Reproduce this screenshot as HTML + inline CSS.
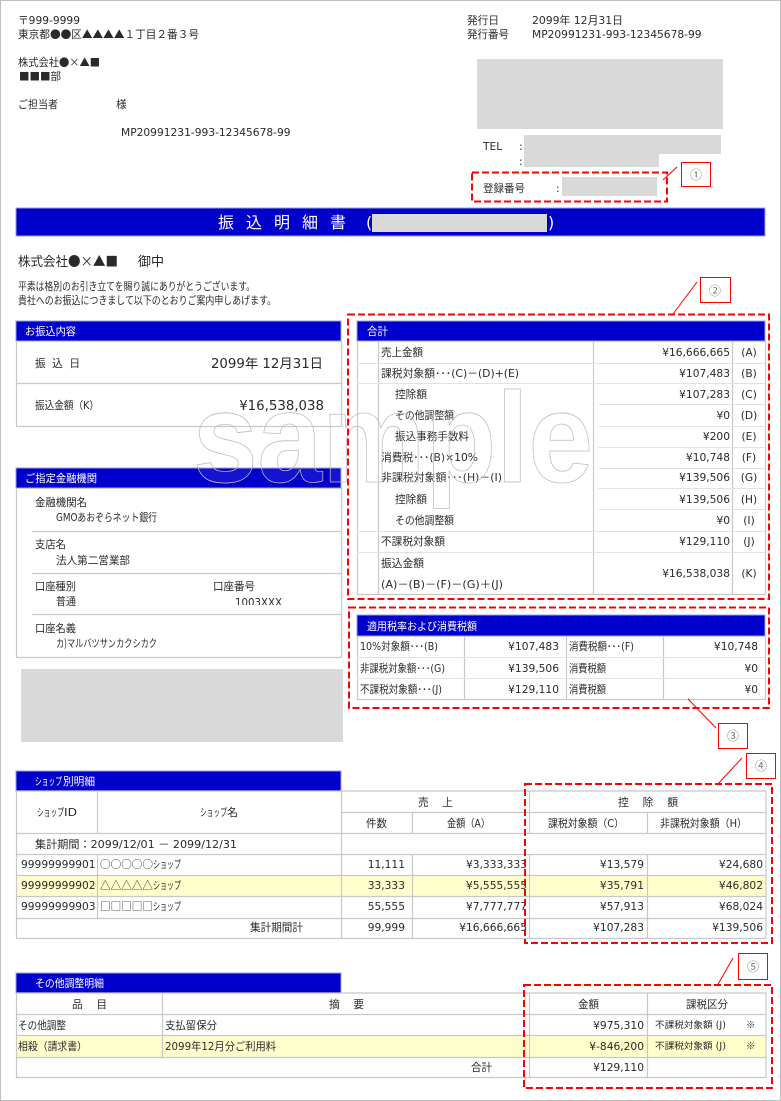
<!DOCTYPE html>
<html lang="ja">
<head>
<meta charset="utf-8">
<title>振込明細書</title>
<style>
html,body{margin:0;padding:0;background:#fff;width:781px;height:1101px;overflow:hidden}
svg{display:block;filter:blur(.3px)}
text{font-family:"DejaVu Sans","Noto Sans CJK JP",sans-serif;font-size:10.67px;fill:#2a2a2a}
.j{font-family:"Noto Sans CJK JP",sans-serif}
.w{fill:#fff}
.e{text-anchor:end}
.m{text-anchor:middle}
.l{stroke:#c8c8c8;stroke-width:1.2;fill:none}
.t{stroke:#e2e2e2;stroke-width:1;fill:none}
.b{fill:#0000cc;stroke:#9c9ce4;stroke-width:1}
.g{fill:#d9d9d9}
.d{fill:none;stroke:#f00;stroke-width:2;stroke-dasharray:7 3}
.r{fill:#fff;stroke:#f00;stroke-width:1}
.rl{stroke:#f00;stroke-width:1;fill:none}
.n{fill:#777;font-size:12px;text-anchor:middle;font-family:"Noto Sans CJK JP",sans-serif}
</style>
</head>
<body>
<svg xmlns="http://www.w3.org/2000/svg" width="781" height="1101" viewBox="0 0 781 1101">
<rect x="0.5" y="0.5" width="780" height="1100" fill="#fff" stroke="#c0c0c0"/>

<!-- address -->
<text x="18" y="24" textLength="62" lengthAdjust="spacingAndGlyphs">〒999-9999</text>
<text class="j" x="18" y="38" textLength="181" lengthAdjust="spacingAndGlyphs">東京都●●区▲▲▲▲１丁目２番３号</text>
<text class="j" x="18" y="66" textLength="82" lengthAdjust="spacingAndGlyphs">株式会社●×▲■</text>
<text class="j" x="19" y="80" textLength="42" lengthAdjust="spacingAndGlyphs">■■■部</text>
<text x="18" y="108" textLength="40" lengthAdjust="spacingAndGlyphs">ご担当者</text>
<text x="116" y="108">様</text>
<text x="121" y="136">MP20991231-993-12345678-99</text>

<text x="467" y="24" textLength="32" lengthAdjust="spacingAndGlyphs">発行日</text>
<text x="532" y="24" textLength="91" lengthAdjust="spacingAndGlyphs">2099年 12月31日</text>
<text x="467" y="38" textLength="42" lengthAdjust="spacingAndGlyphs">発行番号</text>
<text x="532" y="38">MP20991231-993-12345678-99</text>

<rect class="g" x="477" y="59" width="246" height="70"/>
<text x="483" y="150">TEL</text>
<text x="519" y="150">:</text>
<text x="519" y="165">:</text>
<rect class="g" x="524" y="135" width="197" height="19"/>
<rect class="g" x="524" y="154" width="135" height="13"/>
<text x="483" y="192" textLength="42" lengthAdjust="spacingAndGlyphs">登録番号</text>
<text x="556" y="192">:</text>
<rect class="g" x="562" y="177" width="95" height="19"/>
<rect class="d" x="472" y="172.5" width="195" height="29"/>
<path class="rl" d="M663 180L677 167"/>
<rect class="r" x="681.5" y="162.5" width="29" height="24"/>
<text class="n" x="696" y="179">①</text>

<!-- title -->
<rect class="b" x="16" y="208" width="749" height="28"/>
<text class="w" x="218" y="228" style="font-size:16px" textLength="128" lengthAdjust="spacing">振 込 明 細 書</text>
<text class="w" x="366" y="228" style="font-size:16px">(</text>
<rect class="g" x="372" y="214" width="175" height="18"/>
<text class="w" x="548" y="228" style="font-size:16px">)</text>

<text class="j" x="18" y="266" style="font-size:13.33px" textLength="100" lengthAdjust="spacingAndGlyphs">株式会社●×▲■</text>
<text class="j" x="138" y="266" style="font-size:13.33px" textLength="26" lengthAdjust="spacingAndGlyphs">御中</text>
<text x="18" y="290" textLength="237" lengthAdjust="spacingAndGlyphs">平素は格別のお引き立てを賜り誠にありがとうございます。</text>
<text x="18" y="304" textLength="258" lengthAdjust="spacingAndGlyphs">貴社へのお振込につきまして以下のとおりご案内申しあげます。</text>

<!-- お振込内容 -->
<rect class="b" x="16" y="321" width="325" height="20"/>
<text class="w" x="25" y="335" textLength="51" lengthAdjust="spacingAndGlyphs">お振込内容</text>
<path class="l" d="M16.5 341V426.5H341.5V341M16 383.5H341"/>
<text x="35" y="367" textLength="45" lengthAdjust="spacing">振 込 日</text>
<text class="e" x="323" y="368" style="font-size:13.33px">2099年 12月31日</text>
<text x="35" y="409" textLength="64" lengthAdjust="spacingAndGlyphs">振込金額（K）</text>
<text class="e" x="324" y="410" style="font-size:13.33px">¥16,538,038</text>

<!-- ご指定金融機関 -->
<rect class="b" x="16" y="468" width="325" height="20"/>
<text class="w" x="25" y="482" textLength="72" lengthAdjust="spacingAndGlyphs">ご指定金融機関</text>
<path class="l" d="M16.5 488V657.5H341.5V488M32 531.5H341M32 573.5H341M32 614.5H341"/>
<text x="35" y="506" textLength="52" lengthAdjust="spacingAndGlyphs">金融機関名</text>
<text x="56" y="521" textLength="101" lengthAdjust="spacingAndGlyphs">GMOあおぞらネット銀行</text>
<text x="35" y="548" textLength="31" lengthAdjust="spacingAndGlyphs">支店名</text>
<text x="56" y="564" textLength="74" lengthAdjust="spacingAndGlyphs">法人第二営業部</text>
<text x="35" y="590" textLength="41" lengthAdjust="spacingAndGlyphs">口座種別</text>
<text x="56" y="605" textLength="20" lengthAdjust="spacingAndGlyphs">普通</text>
<text x="213" y="590" textLength="42" lengthAdjust="spacingAndGlyphs">口座番号</text>
<text x="235" y="606" textLength="47" lengthAdjust="spacingAndGlyphs">1003XXX</text>
<rect x="230" y="605" width="60" height="4" fill="#fff"/>
<text x="35" y="632" textLength="41" lengthAdjust="spacingAndGlyphs">口座名義</text>
<text class="j" x="56" y="647" textLength="101" lengthAdjust="spacingAndGlyphs">カ)マルバツサンカクシカク</text>
<rect class="g" x="21" y="669" width="322" height="73"/>

<!-- 合計 -->
<rect class="b" x="357" y="321" width="408" height="20"/>
<text class="w" x="367" y="335" textLength="21" lengthAdjust="spacingAndGlyphs">合計</text>
<path class="l" d="M357.5 341V594.5H765.5V341M378.5 341V594M593.5 341V594M732.5 341V594"/>
<path class="t" d="M357 363.5H765M357 383.5H765M598 404.5H765M598 426.5H765M598 447.5H765M598 468.5H765M598 488.5H765M598 509.5H765M357 531.5H765M357 552.5H765"/>
<text x="381" y="356" textLength="42" lengthAdjust="spacingAndGlyphs">売上金額</text>
<text x="381" y="377" textLength="138" lengthAdjust="spacingAndGlyphs">課税対象額･･･(C)－(D)+(E)</text>
<text x="395" y="398" textLength="32" lengthAdjust="spacingAndGlyphs">控除額</text>
<text x="395" y="419" textLength="59" lengthAdjust="spacingAndGlyphs">その他調整額</text>
<text x="395" y="440" textLength="74" lengthAdjust="spacingAndGlyphs">振込事務手数料</text>
<text x="381" y="461" textLength="97" lengthAdjust="spacingAndGlyphs">消費税･･･(B)×10%</text>
<text x="381" y="481" textLength="121" lengthAdjust="spacingAndGlyphs">非課税対象額･･･(H)－(I)</text>
<text x="395" y="503" textLength="32" lengthAdjust="spacingAndGlyphs">控除額</text>
<text x="395" y="524" textLength="59" lengthAdjust="spacingAndGlyphs">その他調整額</text>
<text x="381" y="545" textLength="64" lengthAdjust="spacingAndGlyphs">不課税対象額</text>
<text x="381" y="567" textLength="43" lengthAdjust="spacingAndGlyphs">振込金額</text>
<text x="381" y="588" textLength="122" lengthAdjust="spacingAndGlyphs">(A)－(B)－(F)－(G)＋(J)</text>

<text class="e" x="730" y="356">¥16,666,665</text><text class="m" x="749" y="356">(A)</text>
<text class="e" x="730" y="377">¥107,483</text><text class="m" x="749" y="377">(B)</text>
<text class="e" x="730" y="398">¥107,283</text><text class="m" x="749" y="398">(C)</text>
<text class="e" x="730" y="419">¥0</text><text class="m" x="749" y="419">(D)</text>
<text class="e" x="730" y="440">¥200</text><text class="m" x="749" y="440">(E)</text>
<text class="e" x="730" y="461">¥10,748</text><text class="m" x="749" y="461">(F)</text>
<text class="e" x="730" y="481">¥139,506</text><text class="m" x="749" y="481">(G)</text>
<text class="e" x="730" y="503">¥139,506</text><text class="m" x="749" y="503">(H)</text>
<text class="e" x="730" y="524">¥0</text><text class="m" x="749" y="524">(I)</text>
<text class="e" x="730" y="545">¥129,110</text><text class="m" x="749" y="545">(J)</text>
<text class="e" x="730" y="577">¥16,538,038</text><text class="m" x="749" y="577">(K)</text>

<!-- sample watermark -->
<text x="193" y="482" textLength="400" lengthAdjust="spacingAndGlyphs" style="font-family:'Liberation Sans',sans-serif;font-weight:bold;font-size:128px;fill:#fff;fill-opacity:.08;stroke:#bdbdbd;stroke-width:.8;stroke-linejoin:round">sample</text>

<rect class="d" x="348" y="314.5" width="421" height="284.5"/>
<path class="rl" d="M673 314L697 282"/>
<rect class="r" x="700.5" y="277.5" width="30" height="25"/>
<text class="n" x="715" y="295">②</text>

<!-- 適用税率 -->
<rect class="b" x="357" y="615" width="408" height="21"/>
<text class="w" x="367" y="630" textLength="110" lengthAdjust="spacingAndGlyphs">適用税率および消費税額</text>
<path class="l" d="M357.5 636V699.5H765.5V636M464.5 636V699M566.5 636V699M663.5 636V699"/>
<path class="t" d="M357 657.5H765M357 678.5H765"/>
<text x="360" y="650" textLength="78" lengthAdjust="spacingAndGlyphs">10%対象額･･･(B)</text>
<text x="360" y="672" textLength="85" lengthAdjust="spacingAndGlyphs">非課税対象額･･･(G)</text>
<text x="360" y="693" textLength="82" lengthAdjust="spacingAndGlyphs">不課税対象額･･･(J)</text>
<text class="e" x="559" y="650">¥107,483</text>
<text class="e" x="559" y="672">¥139,506</text>
<text class="e" x="559" y="693">¥129,110</text>
<text x="569" y="650" textLength="65" lengthAdjust="spacingAndGlyphs">消費税額･･･(F)</text>
<text x="569" y="672" textLength="37" lengthAdjust="spacingAndGlyphs">消費税額</text>
<text x="569" y="693" textLength="37" lengthAdjust="spacingAndGlyphs">消費税額</text>
<text class="e" x="758" y="650">¥10,748</text>
<text class="e" x="758" y="672">¥0</text>
<text class="e" x="758" y="693">¥0</text>
<rect class="d" x="349" y="607.5" width="420" height="100.5"/>
<path class="rl" d="M688 699L716 728"/>
<rect class="r" x="718.5" y="723.5" width="29" height="25"/>
<text class="n" x="733" y="740">③</text>

<!-- ショップ別明細 -->
<rect class="b" x="16" y="771" width="325" height="20"/>
<text class="w" x="35" y="785" textLength="27" lengthAdjust="spacingAndGlyphs">ショップ</text>
<text class="w" x="63" y="785" textLength="32" lengthAdjust="spacingAndGlyphs">別明細</text>
<rect x="17" y="875" width="749" height="21" fill="#ffffcc"/>
<path class="l" d="M16.5 791V938.5H766V791H16M341 812.5H766M16 833.5H766M16 854.5H766M16 875.5H766M16 896.5H766M16 918.5H766"/>
<path class="l" d="M97.5 791V833M97.5 854V918M341.5 791V938M412.5 812V833M412.5 854V938M529.5 791V833M529.5 854V938M647.5 812V833M647.5 854V938"/>
<text x="37" y="816" textLength="27" lengthAdjust="spacingAndGlyphs">ショップ</text><text x="64" y="816" textLength="13" lengthAdjust="spacingAndGlyphs">ID</text>
<text x="200" y="816" textLength="27" lengthAdjust="spacingAndGlyphs">ショップ</text><text x="227" y="816" textLength="11" lengthAdjust="spacingAndGlyphs">名</text>
<text x="418" y="806" textLength="35" lengthAdjust="spacing">売　上</text>
<text x="366" y="827" textLength="21" lengthAdjust="spacingAndGlyphs">件数</text>
<text x="447" y="827" textLength="43" lengthAdjust="spacingAndGlyphs">金額（A）</text>
<text x="618" y="806" textLength="60" lengthAdjust="spacing">控　除　額</text>
<text x="548" y="827" textLength="76" lengthAdjust="spacingAndGlyphs">課税対象額（C）</text>
<text x="660" y="827" textLength="87" lengthAdjust="spacingAndGlyphs">非課税対象額（H）</text>
<text x="35" y="848" textLength="202" lengthAdjust="spacingAndGlyphs">集計期間：2099/12/01 － 2099/12/31</text>

<text x="21" y="868">99999999901</text><text class="j" x="100" y="868" textLength="53" lengthAdjust="spacingAndGlyphs">○○○○○</text><text x="153" y="868" textLength="28" lengthAdjust="spacingAndGlyphs">ショップ</text>
<text x="21" y="889">99999999902</text><text class="j" x="100" y="889" textLength="53" lengthAdjust="spacingAndGlyphs">△△△△△</text><text x="153" y="889" textLength="28" lengthAdjust="spacingAndGlyphs">ショップ</text>
<text x="21" y="910">99999999903</text><text class="j" x="100" y="910" textLength="53" lengthAdjust="spacingAndGlyphs">□□□□□</text><text x="153" y="910" textLength="28" lengthAdjust="spacingAndGlyphs">ショップ</text>
<text x="250" y="931" textLength="53" lengthAdjust="spacingAndGlyphs">集計期間計</text>

<text class="e" x="405" y="868">11,111</text><text class="e" x="527" y="868">¥3,333,333</text><text class="e" x="644" y="868">¥13,579</text><text class="e" x="763" y="868">¥24,680</text>
<text class="e" x="405" y="889">33,333</text><text class="e" x="527" y="889">¥5,555,555</text><text class="e" x="644" y="889">¥35,791</text><text class="e" x="763" y="889">¥46,802</text>
<text class="e" x="405" y="910">55,555</text><text class="e" x="527" y="910">¥7,777,777</text><text class="e" x="644" y="910">¥57,913</text><text class="e" x="763" y="910">¥68,024</text>
<text class="e" x="405" y="931">99,999</text><text class="e" x="527" y="931">¥16,666,665</text><text class="e" x="644" y="931">¥107,283</text><text class="e" x="763" y="931">¥139,506</text>

<rect class="d" x="525" y="784" width="247" height="159"/>
<path class="rl" d="M742 758L717 785"/>
<rect class="r" x="746.5" y="753.5" width="29" height="25"/>
<text class="n" x="761" y="770">④</text>

<!-- その他調整明細 -->
<rect class="b" x="16" y="973" width="325" height="20"/>
<text class="w" x="35" y="987" textLength="69" lengthAdjust="spacingAndGlyphs">その他調整明細</text>
<rect x="17" y="1035" width="749" height="22" fill="#ffffcc"/>
<path class="l" d="M16.5 993V1077.5H766V993H16M16 1014.5H766M16 1035.5H766M16 1057.5H766"/>
<path class="l" d="M162.5 993V1057M529.5 993V1077M647.5 993V1077"/>
<text x="72" y="1008" textLength="35" lengthAdjust="spacing">品　目</text>
<text x="329" y="1008" textLength="35" lengthAdjust="spacing">摘　要</text>
<text x="578" y="1008" textLength="21" lengthAdjust="spacingAndGlyphs">金額</text>
<text x="686" y="1008" textLength="42" lengthAdjust="spacingAndGlyphs">課税区分</text>
<text x="18" y="1029" textLength="48" lengthAdjust="spacingAndGlyphs">その他調整</text>
<text x="165" y="1029" textLength="52" lengthAdjust="spacingAndGlyphs">支払留保分</text>
<text x="18" y="1050" textLength="69" lengthAdjust="spacingAndGlyphs">相殺（請求書）</text>
<text x="165" y="1050" textLength="111" lengthAdjust="spacingAndGlyphs">2099年12月分ご利用料</text>
<text x="471" y="1071" textLength="21" lengthAdjust="spacingAndGlyphs">合計</text>
<text class="e" x="644" y="1029">¥975,310</text>
<text class="e" x="644" y="1050">¥-846,200</text>
<text class="e" x="644" y="1071">¥129,110</text>
<text x="655" y="1028" style="font-size:9.33px" textLength="71" lengthAdjust="spacingAndGlyphs">不課税対象額 (J)</text>
<text class="j" x="746" y="1028" style="font-size:9.33px">※</text>
<text x="655" y="1049" style="font-size:9.33px" textLength="71" lengthAdjust="spacingAndGlyphs">不課税対象額 (J)</text>
<text class="j" x="746" y="1049" style="font-size:9.33px">※</text>

<rect class="d" x="524" y="985" width="248" height="103"/>
<path class="rl" d="M733 958L717 986"/>
<rect class="r" x="738.5" y="953.5" width="29" height="26"/>
<text class="n" x="753" y="971">⑤</text>
</svg>
</body>
</html>
